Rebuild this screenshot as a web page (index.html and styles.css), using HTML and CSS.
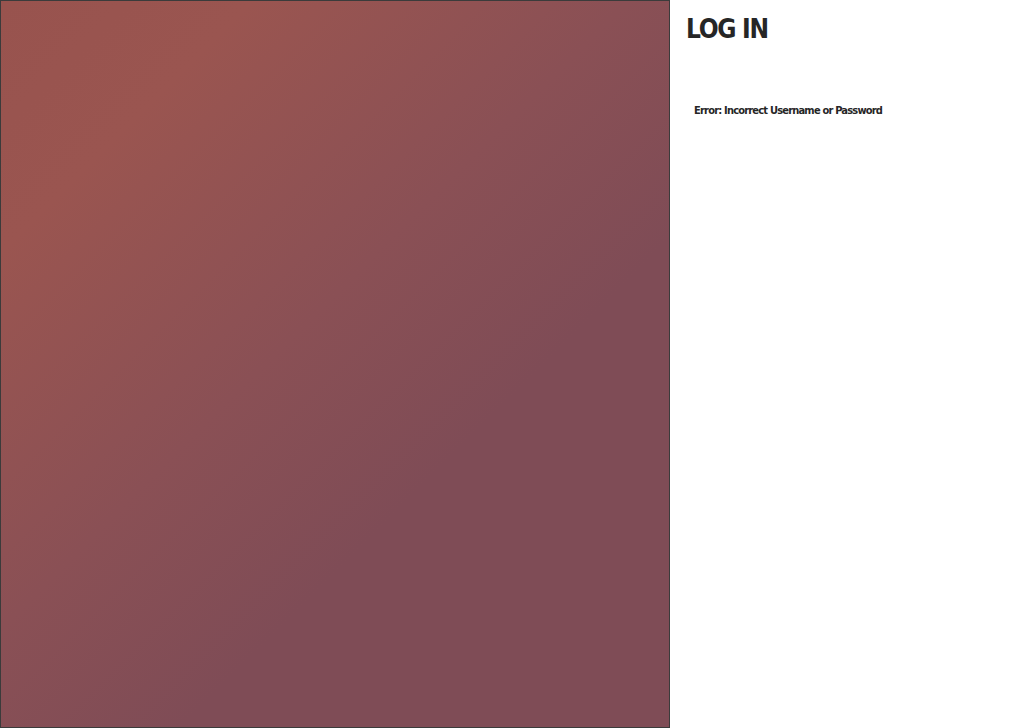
FILE: index.html
```html
<!DOCTYPE html>
<html>
<head>
<meta charset="utf-8">
<title>Log in</title>
<link rel="stylesheet" href="styles.css">
</head>
<body>
<div class="page">
  <div class="hero"></div>
  <div class="side">
    <h1 class="title">LOG IN</h1>
    <p class="error">Error: Incorrect Username or Password</p>
  </div>
</div>
</body>
</html>
```
FILE: styles.css
```css
html, body {
  margin: 0;
  padding: 0;
  background: #ffffff;
}
.page {
  display: flex;
  width: 1024px;
  height: 728px;
}
.hero {
  box-sizing: border-box;
  width: 670px;
  height: 728px;
  flex: none;
  border: 1px solid #3b3b3b;
  background: linear-gradient(135deg, #98534e 0%, #9a5550 18%, #8a5055 45%, #7f4c56 65%, #7f4c56 100%);
}
.side {
  padding-left: 16px;
  font-family: "DejaVu Sans Condensed", "DejaVu Sans", sans-serif;
  color: #262626;
}
.title {
  margin: 14px 0 0 0;
  font-size: 26px;
  font-weight: bold;
  letter-spacing: -1.3px;
  line-height: 30px;
}
.error {
  margin: 59px 0 0 8px;
  font-size: 11px;
  font-weight: bold;
  letter-spacing: -0.8px;
  line-height: 16px;
}
```
